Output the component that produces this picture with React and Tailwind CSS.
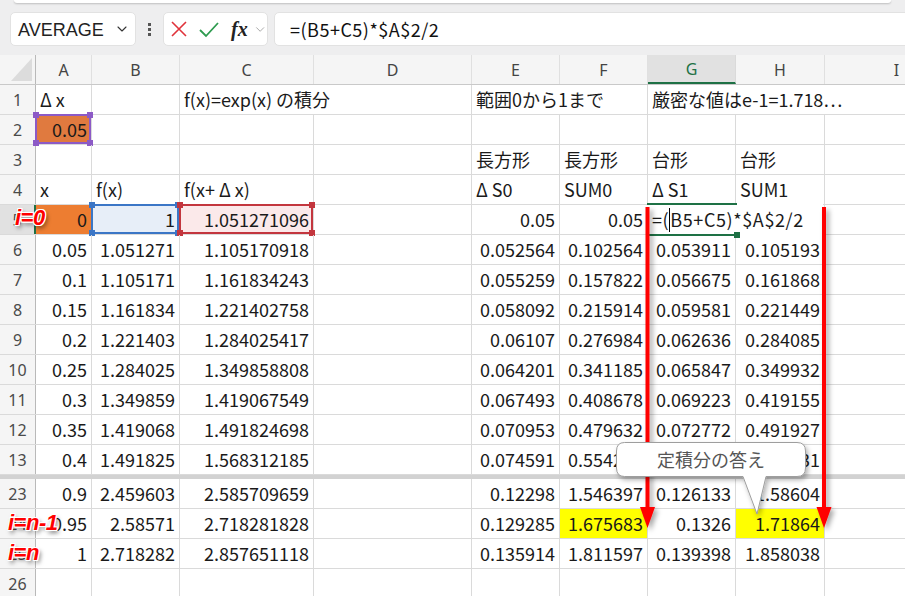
import { ChevronDown } from "lucide-react";

const W = ["w-[56px]", "w-[88px]", "w-[134px]", "w-[158px]", "w-[88px]", "w-[88px]", "w-[88px]", "w-[89px]", "w-[144px]"];
const LETTERS = ["A", "B", "C", "D", "E", "F", "G", "H", "I"];

const top = [
  { n: "1", c: ["Δ x", "", "f(x)=exp(x) の積分", "", "範囲0から1まで", "", "厳密な値はe-1=1.718…", "", ""], noR: [2, 4, 6, 7] },
  { n: "2", c: ["0.05", "", "", "", "", "", "", "", ""] },
  { n: "3", c: ["", "", "", "", "長方形", "長方形", "台形", "台形", ""] },
  { n: "4", c: ["x", "f(x)", "f(x+ Δ x)", "", "Δ S0", "SUM0", "Δ S1", "SUM1", ""] },
  { n: "5", c: ["0", "1", "1.051271096", "", "0.05", "0.05", "", "", ""], active: true },
  { n: "6", c: ["0.05", "1.051271", "1.105170918", "", "0.052564", "0.102564", "0.053911", "0.105193", ""] },
  { n: "7", c: ["0.1", "1.105171", "1.161834243", "", "0.055259", "0.157822", "0.056675", "0.161868", ""] },
  { n: "8", c: ["0.15", "1.161834", "1.221402758", "", "0.058092", "0.215914", "0.059581", "0.221449", ""] },
  { n: "9", c: ["0.2", "1.221403", "1.284025417", "", "0.06107", "0.276984", "0.062636", "0.284085", ""] },
  { n: "10", c: ["0.25", "1.284025", "1.349858808", "", "0.064201", "0.341185", "0.065847", "0.349932", ""] },
  { n: "11", c: ["0.3", "1.349859", "1.419067549", "", "0.067493", "0.408678", "0.069223", "0.419155", ""] },
  { n: "12", c: ["0.35", "1.419068", "1.491824698", "", "0.070953", "0.479632", "0.072772", "0.491927", ""] },
  { n: "13", c: ["0.4", "1.491825", "1.568312185", "", "0.074591", "0.554223", "0.076503", "0.568431", ""] },
];

const bottom = [
  { n: "23", c: ["0.9", "2.459603", "2.585709659", "", "0.12298", "1.546397", "0.126133", "1.58604", ""] },
  { n: "24", c: ["0.95", "2.58571", "2.718281828", "", "0.129285", "1.675683", "0.1326", "1.71864", ""] },
  { n: "25", c: ["1", "2.718282", "2.857651118", "", "0.135914", "1.811597", "0.139398", "1.858038", ""] },
  { n: "26", c: ["", "", "", "", "", "", "", "", ""] },
];

// fills and selection frames keyed by "row:col"
const fills = {
  "2:0": "bg-[#e07a3f]",
  "5:0": "bg-[#ed7d31]",
  "5:1": "bg-[#e7eef8]",
  "5:2": "bg-[#fbe9ea]",
  "24:5": "bg-[#ffff00]",
  "24:7": "bg-[#ffff00]",
};

const frames = {
  "2:0": { b: "border-[#8c5ac6]", sq: "bg-[#8c5ac6]" },
  "5:1": { b: "border-[#3b76c6]", sq: "bg-[#3b76c6]" },
  "5:2": { b: "border-[#c3363e]", sq: "bg-[#c3363e]" },
};

function Frame({ b, sq }) {
  return (
    <div className={`pointer-events-none absolute -top-px -left-px right-0 bottom-0 border-2 ${b}`}>
      <div className={`absolute -left-[4px] -top-[4px] w-[6px] h-[6px] ${sq}`} />
      <div className={`absolute -right-[4px] -top-[4px] w-[6px] h-[6px] ${sq}`} />
      <div className={`absolute -left-[4px] -bottom-[4px] w-[6px] h-[6px] ${sq}`} />
      <div className={`absolute -right-[4px] -bottom-[4px] w-[6px] h-[6px] ${sq}`} />
    </div>
  );
}

function Row({ r }) {
  return (
    <div className="flex h-[30px] border-b border-[#dadada]">
      <div
        className={`w-[36px] shrink-0 flex items-center justify-center text-[16px] text-[#4a4a4a] font-['Noto_Sans',sans-serif] ${
          r.active ? "bg-[#e1e1e1] border-r-2 border-[#1e7145]" : "bg-[#f5f5f5] border-r border-[#b9b9b9]"
        }`}
      >
        {r.n}
      </div>
      {r.c.map((v, i) => {
        const num = /^[\d.]+$/.test(v);
        const key = `${r.n}:${i}`;
        const noR = r.noR && r.noR.includes(i);
        const fr = frames[key];
        return (
          <div
            key={i}
            className={`relative shrink-0 h-full flex items-center ${W[i]} ${noR ? "" : "border-r border-[#dadada]"} ${
              fills[key] || ""
            } ${num ? "justify-end pr-[4px]" : "justify-start pl-[4px]"}`}
          >
            <span className="whitespace-nowrap">{v}</span>
            {fr && <Frame b={fr.b} sq={fr.sq} />}
          </div>
        );
      })}
    </div>
  );
}

function Label({ text, cls }) {
  return (
    <div
      className={`absolute font-['Liberation_Sans',Arial,sans-serif] font-bold italic text-[22px] leading-none text-[#ff0000] tracking-[-0.5px] [text-shadow:1px_1px_0_#fff,-1px_-1px_0_#fff,1px_-1px_0_#fff,-1px_1px_0_#fff,0_1px_0_#fff,1px_0_0_#fff,2px_3px_4px_rgba(0,0,0,0.55)] ${cls}`}
    >
      {text}
    </div>
  );
}

export default function App() {
  return (
    <div className="relative w-[905px] h-[596px] overflow-hidden bg-white text-[18px] text-[#1a1a1a] font-['Noto_Sans_CJK_JP',sans-serif]">
      {/* formula bar */}
      <div className="h-[55px] bg-[#eeeeef] flex flex-col">
        <div className="h-[3px] mx-[14px] bg-white rounded-b-[6px] shadow-[0_1px_2px_rgba(0,0,0,0.2)]" />
        <div className="mt-[9px] flex items-center h-[34px] pl-[10px]">
          <div className="w-[126px] h-[34px] shrink-0 bg-white rounded-[5px] border border-[#e2e2e2] flex items-center justify-between pl-[7px] pr-[5px]">
            <span className="font-['Liberation_Sans',sans-serif] text-[18px] text-[#222] pt-[2px]">AVERAGE</span>
            <ChevronDown size={16} strokeWidth={1.6} className="text-[#333]" />
          </div>
          <div className="w-[27px] shrink-0 flex flex-col items-center gap-[2px]">
            <div className="w-[3px] h-[3px] bg-[#555]" />
            <div className="w-[3px] h-[3px] bg-[#555]" />
            <div className="w-[3px] h-[3px] bg-[#555]" />
          </div>
          <div className="w-[105px] h-[34px] shrink-0 bg-white rounded-[5px] border border-[#e2e2e2] flex items-center pl-[6px]">
            <svg width="18" height="18" viewBox="0 0 18 18" className="shrink-0">
              <path d="M2 2 L16 16 M16 2 L2 16" stroke="#e0333b" strokeWidth="1.6" fill="none" />
            </svg>
            <svg width="22" height="18" viewBox="0 0 22 18" className="ml-[10px] shrink-0">
              <path d="M2 10 L8 16 L20 3" stroke="#2e9b4f" strokeWidth="1.8" fill="none" />
            </svg>
            <span className="ml-[11px] font-['Liberation_Serif',serif] italic font-bold text-[20px] text-[#222] leading-none">fx</span>
            <ChevronDown size={15} strokeWidth={1.4} className="ml-[5px] text-[#999]" />
          </div>
          <div className="ml-[6px] w-[640px] h-[34px] shrink-0 bg-white rounded-l-[5px] border border-[#e2e2e2] flex items-center pl-[15px] text-[18px] tracking-[0.5px] text-[#111]">
            =(B5+C5)*$A$2/2
          </div>
        </div>
      </div>

      {/* column headers */}
      <div className="flex h-[30px] border-b border-[#c9c9c9] bg-[#f5f5f5] font-['Noto_Sans',sans-serif] text-[16px] text-[#444]">
        <div className="relative w-[36px] shrink-0 border-r border-[#b9b9b9] flex items-end justify-end pb-[2px] pr-[2px]">
          <svg width="22" height="24" viewBox="0 0 22 24">
            <path d="M21 0 L21 23 L0 23 Z" fill="#dcdcdc" />
          </svg>
        </div>
        {LETTERS.map((l, i) => (
          <div
            key={l}
            className={`shrink-0 flex items-center justify-center ${W[i]} ${
              l === "G" ? "bg-[#e1e1e1] text-[#1e7145] border-b-2 border-[#1e7145] border-r border-r-[#dadada]" : "border-r border-[#e0e0e0]"
            }`}
          >
            {l}
          </div>
        ))}
      </div>

      {top.map((r) => (
        <Row key={r.n} r={r} />
      ))}
      <div className="h-[4px] bg-[#d2d2d2]" />
      {bottom.map((r) => (
        <Row key={r.n} r={r} />
      ))}

      {/* G5 in edit mode */}
      <div className="absolute left-[647px] top-[203px] w-[176px] h-[33px] bg-white">
        <div className="absolute left-0 top-0 w-[90px] h-[2px] bg-[#1e7145]" />
        <div className="absolute left-0 bottom-0 w-[90px] h-[2px] bg-[#1e7145]" />
        <div className="absolute left-[87px] -bottom-[2px] w-[6px] h-[6px] bg-[#1e7145]" />
        <div className="absolute left-[5px] top-0 h-full flex items-center whitespace-nowrap tracking-[0.6px]">
          =(<span className="inline-block w-px h-[24px] bg-black align-middle" />B5+C5)*$A$2/2
        </div>
      </div>

      {/* arrows */}
      <svg className="pointer-events-none absolute left-0 top-0" width="905" height="596">
        <defs>
          <filter id="sh" x="-50%" y="-10%" width="200%" height="130%">
            <feDropShadow dx="3" dy="3" stdDeviation="2.5" floodColor="#000" floodOpacity="0.35" />
          </filter>
        </defs>
        <g filter="url(#sh)" fill="#ff0000" stroke="none">
          <rect x="645.5" y="207" width="4" height="302" />
          <path d="M640 507 L655 507 L647.5 528 Z" />
          <rect x="822" y="207" width="4" height="302" />
          <path d="M816.5 507 L831.5 507 L824 528 Z" />
        </g>
      </svg>

      {/* callout */}
      <svg className="pointer-events-none absolute left-0 top-0" width="905" height="596">
        <defs>
          <filter id="sh2" x="-20%" y="-30%" width="140%" height="180%">
            <feDropShadow dx="2" dy="3" stdDeviation="2.5" floodColor="#000" floodOpacity="0.3" />
          </filter>
        </defs>
        <path
          d="M624.5 442.5 H797 Q805.5 442.5 805.5 451 V468 Q805.5 476.5 797 476.5 H766 L757 514 L743 476.5 H624.5 Q616.5 476.5 616.5 468 V451 Q616.5 442.5 624.5 442.5 Z"
          fill="#fff"
          stroke="#9e9e9e"
          strokeWidth="1"
          filter="url(#sh2)"
        />
      </svg>
      <div className="absolute left-[616px] top-[442px] w-[190px] h-[34px] flex items-center justify-center text-[18px] text-[#555]">
        定積分の答え
      </div>

      <Label text="i=0" cls="left-[15px] top-[207px]" />
      <Label text="i=n-1" cls="left-[8px] top-[512px]" />
      <Label text="i=n" cls="left-[8px] top-[542px]" />
    </div>
  );
}
